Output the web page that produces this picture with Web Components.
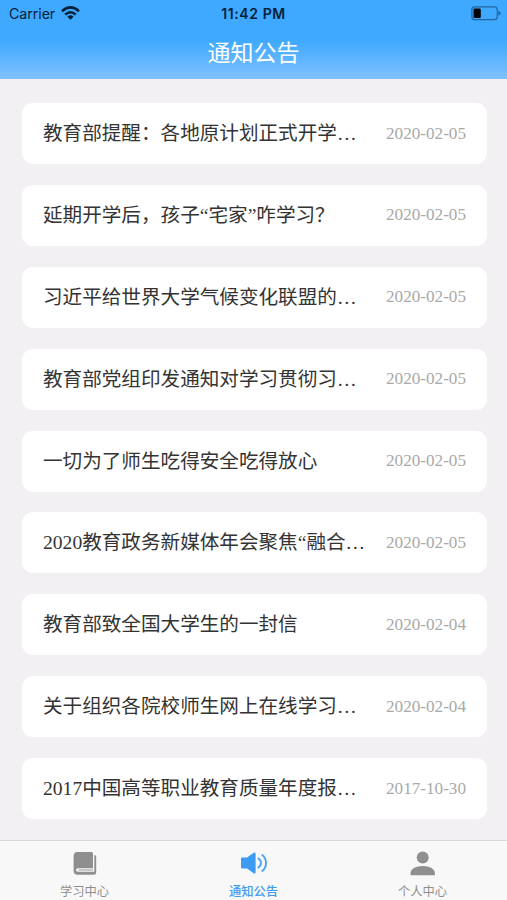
<!DOCTYPE html>
<html lang="zh-CN">
    <head>
        <meta charset="utf-8">
        <title>通知公告</title>
        <style>
            html, body { margin: 0; }
            body {
                height: 900px;
                overflow: hidden;
                background: #f2f0f2;
                font-family: "Liberation Serif", "Noto Sans CJK SC", serif;
            }
        </style>
    </head>
    <body>
        <notice-app>
            <status-bar slot="header" carrier="Carrier" time="11:42 PM"></status-bar>
            <nav-bar slot="header">通知公告</nav-bar>
            <notice-item date="2020-02-05">教育部提醒：各地原计划正式开学…</notice-item>
            <notice-item date="2020-02-05">延期开学后，孩子“宅家”咋学习？</notice-item>
            <notice-item date="2020-02-05">习近平给世界大学气候变化联盟的…</notice-item>
            <notice-item date="2020-02-05">教育部党组印发通知对学习贯彻习…</notice-item>
            <notice-item date="2020-02-05">一切为了师生吃得安全吃得放心</notice-item>
            <notice-item date="2020-02-05">2020教育政务新媒体年会聚焦“融合…</notice-item>
            <notice-item date="2020-02-04">教育部致全国大学生的一封信</notice-item>
            <notice-item date="2020-02-04">关于组织各院校师生网上在线学习…</notice-item>
            <notice-item date="2017-10-30">2017中国高等职业教育质量年度报…</notice-item>
            <tab-item slot="tabs" label="学习中心">
                <svg width="26" height="26" viewBox="0 0 26 26">
                    <path fill="#8f8f8f" d="M5.500 2H19.500Q21 2 21 3.500V18.200H5.800Q4 18.200 4 20T5.800 21.800H22.300V5Q24.200 5 24.200 7V22.500Q24.200 24.800 22 24.800H5.500Q1.600 24.800 1.600 20.800V6Q1.600 2 5.500 2Z"/>
                    <path fill="#a8a8a8" d="M6.500 19.400H21V20.600H6.500Z"/>
                </svg>
            </tab-item>
            <tab-item slot="tabs" label="通知公告" active>
                <svg width="28" height="26" viewBox="0 0 28 26">
                    <path fill="#3d9bf2" d="M2 7.500H7L13.700 2.700Q15.600 1.700 15.600 3.800V22.200Q15.600 24.300 13.700 23.300L7 18.500H2Q1 18.500 1 17.500V8.500Q1 7.500 2 7.500Z"/>
                    <path fill="none" stroke="#4da3f3" stroke-width="1.900" stroke-linecap="round" d="M18.300 8.500Q21 10 21 13T18.300 17.500M22.300 5Q26 8 26 13T22.300 21"/>
                </svg>
            </tab-item>
            <tab-item slot="tabs" label="个人中心">
                <svg width="26" height="26" viewBox="0 0 26 26">
                    <circle cx="12.700" cy="7.600" r="6" fill="#8f8f8f"/>
                    <path fill="#8f8f8f" d="M.6 25.300V22.500Q2 16 12.700 16T24.900 22.500V25.300Z"/>
                </svg>
            </tab-item>
        </notice-app>

        <!-- ---------------------------------------------------------------------------- APP -->
        <template id="notice-app">
            <header><slot name="header"></slot></header>
            <main><slot></slot></main>
            <footer><slot name="tabs"></slot></footer>
            <style>
                :host {
                    display: flex;
                    flex-direction: column;
                    height: 900px;
                }
                header {
                    flex: none;
                    box-sizing: border-box;
                    height: 79px;
                    background: linear-gradient(#3fa9ff 0, #3fa9ff 40px, #7dc0fe 78px);
                }
                main {
                    flex: 1;
                    min-height: 0;
                    display: flex;
                    flex-direction: column;
                    gap: 20.900px;
                    padding: 24px 20px 0 21.500px;
                }
                footer {
                    flex: none;
                    box-sizing: border-box;
                    height: 60px;
                    display: grid;
                    grid-template-columns: repeat(3, 1fr);
                    border-top: 1px solid #d9d8d9;
                    background: #f8f8f8;
                }
            </style>
        </template>

        <!-- ---------------------------------------------------------------------------- STATUS -->
        <template id="status-bar">
            <div class="left">
                <span id="carrier"></span>
                <svg width="19" height="14" viewBox="0 0 19 14">
                    <g fill="none" stroke="#06213a" stroke-width="2.500">
                        <path d="M1 5.200Q9.500 -2.400 18 5.200"/>
                        <path d="M4.200 8.600Q9.500 3.800 14.800 8.600"/>
                    </g>
                    <path fill="#06213a" d="M6.400 10.700Q9.500 8 12.600 10.700L9.500 13.800Z"/>
                </svg>
            </div>
            <span id="time"></span>
            <div class="right">
                <svg width="30" height="15" viewBox="0 0 30 15">
                    <rect x=".9" y=".9" width="25.400" height="12.800" rx="3" fill="none" stroke="#22659f" stroke-width="1.200"/>
                    <path fill="#22659f" d="M27.400 4.800Q29.600 5.500 29.600 7.300T27.400 9.800Z"/>
                    <rect x="2.500" y="2.600" width="7.300" height="9.400" rx="1.300" fill="#00060c"/>
                </svg>
            </div>
            <style>
                :host {
                    display: grid;
                    grid-template-columns: 1fr auto 1fr;
                    align-items: center;
                    height: 27px;
                    padding: 0 6px 0 9px;
                    color: #06213a;
                    font: 14.200px/27px Inter, sans-serif;
                }
                .left { display: flex; align-items: center; gap: 6px; }
                .left svg { margin-top: -2px; }
                .right { display: flex; justify-content: flex-end; margin-top: -1px; }
                #carrier { letter-spacing: -.05px; }
                #time { margin-right: 3px; font-weight: 600; font-size: 14px; letter-spacing: .6px; }
            </style>
        </template>

        <!-- ---------------------------------------------------------------------------- NAV -->
        <template id="nav-bar">
            <slot></slot>
            <style>
                :host {
                    display: block;
                    height: 51px;
                    color: #fff;
                    font: 23px/48px "Noto Sans CJK SC", sans-serif;
                    text-align: center;
                }
            </style>
        </template>

        <!-- ---------------------------------------------------------------------------- NOTICE -->
        <template id="notice-item">
            <span class="title"><slot></slot></span>
            <time></time>
            <style>
                :host {
                    flex: none;
                    box-sizing: border-box;
                    display: flex;
                    align-items: center;
                    justify-content: space-between;
                    height: 61px;
                    padding: 0 21px 0 21.500px;
                    border-radius: 11px;
                    background: #fff;
                    white-space: nowrap;
                }
                .title { padding-top: 1px; color: #333; font-size: 19.600px; line-height: 28px; }
                time { color: #a9a9a9; font-size: 17.150px; line-height: 24px; }
            </style>
        </template>

        <!-- ---------------------------------------------------------------------------- TAB -->
        <template id="tab-item">
            <slot></slot>
            <span id="label"></span>
            <style>
                :host {
                    display: flex;
                    flex-direction: column;
                    align-items: center;
                    padding-top: 9px;
                    color: #8f8f8f;
                    font: 12.300px/18px "Noto Sans CJK SC", sans-serif;
                }
                :host([active]) { color: #3d9bf2; font-weight: 500; }
                ::slotted(svg) { display: block; margin-bottom: 6px; }
            </style>
        </template>

        <script>
            class TemplateElement extends HTMLElement
            {
                constructor()
                {
                    super();
                    let template = document.querySelector('template#' + this.localName);
                    this.attachShadow({ mode: 'open' }).appendChild(template.content.cloneNode(true));
                }

                setText(selector, value)
                {
                    this.shadowRoot.querySelector(selector).textContent = value;
                }
            }

            class NoticeApp extends TemplateElement {}
            window.customElements.define('notice-app', NoticeApp);

            class StatusBar extends TemplateElement
            {
                static get observedAttributes() { return ['carrier', 'time']; }

                attributeChangedCallback(attribute, prev, value)
                {
                    this.setText('#' + attribute, value);
                }
            }
            window.customElements.define('status-bar', StatusBar);

            class NavBar extends TemplateElement {}
            window.customElements.define('nav-bar', NavBar);

            class NoticeItem extends TemplateElement
            {
                static get observedAttributes() { return ['date']; }

                attributeChangedCallback(attribute, prev, value)
                {
                    this.setText('time', value);
                }
            }
            window.customElements.define('notice-item', NoticeItem);

            class TabItem extends TemplateElement
            {
                static get observedAttributes() { return ['label']; }

                attributeChangedCallback(attribute, prev, value)
                {
                    this.setText('#label', value);
                }
            }
            window.customElements.define('tab-item', TabItem);
        </script>
    </body>
</html>
